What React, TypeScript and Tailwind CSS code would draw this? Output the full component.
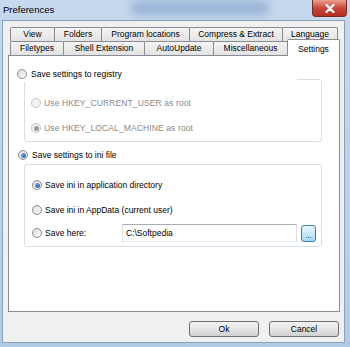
import React from 'react';

const tabBase =
  'flex items-center justify-center h-full border-t border-x border-[#898c95] bg-gradient-to-b from-[#f4f4f4] to-[#e2e2e2] -ml-px first:ml-0 rounded-t-[2px]';

function Radio({ checked, disabled }: { checked?: boolean; disabled?: boolean }) {
  return (
    <span
      className={`flex items-center justify-center w-[10px] h-[10px] shrink-0 rounded-full border ${
        disabled
          ? 'border-[#c4c4c4] bg-[#f4f4f4]'
          : 'border-[#8e8f8f] bg-gradient-to-br from-[#dcdcdc] to-[#fbfbfb]'
      }`}
    >
      {checked && (
        <span
          className={`w-[5px] h-[5px] rounded-full ${
            disabled ? 'bg-[#9a9a9a]' : 'bg-gradient-to-br from-[#7fb6ee] to-[#1550a8]'
          }`}
        />
      )}
    </span>
  );
}

function Option({
  label,
  checked,
  disabled,
}: {
  label: string;
  checked?: boolean;
  disabled?: boolean;
}) {
  return (
    <div className="flex items-center h-[16px] gap-[3px]">
      <Radio checked={checked} disabled={disabled} />
      <span className={disabled ? 'text-[#8a8a8a] tracking-[0.12px]' : 'text-black'}>
        {label}
      </span>
    </div>
  );
}

export default function App() {
  const row1 = [
    ['View', 'w-[45px]'],
    ['Folders', 'w-[48px]'],
    ['Program locations', 'w-[89px]'],
    ['Compress & Extract', 'w-[94px]'],
    ['Language', 'w-[56px]'],
  ];
  const row2 = [
    ['Filetypes', 'w-[54px]'],
    ['Shell Extension', 'w-[82px]'],
    ['AutoUpdate', 'w-[70px]'],
    ['Miscellaneous', 'w-[75px]'],
  ];

  return (
    <div className="relative w-[350px] h-[347px] flex flex-col overflow-hidden bg-gradient-to-b from-[#c6d9ee] to-[#b2cbe6] font-['Liberation_Sans',Arial,sans-serif] text-[8.5px] text-black">
      {/* blurred glass behind the caption */}
      <div className="absolute left-[130px] top-[1px] w-[140px] h-[14px] rounded-full bg-[#4f79ad] opacity-40 blur-[5px]" />

      {/* Title bar */}
      <div className="relative flex justify-between h-[20px] pl-[3px] pr-[3px]">
        <span className="pt-[3px] text-[9.5px] text-black">Preferences</span>
        <div className="flex items-center justify-center w-[35px] h-[17px] rounded-b-[4px] border border-t-0 border-[#7a2a22] bg-gradient-to-b from-[#e8a090] via-[#c9463a] to-[#b53024]">
          <svg width="10" height="9" viewBox="0 0 10 9">
            <path d="M1.5 1 L8.5 8 M8.5 1 L1.5 8" stroke="#ffffff" strokeWidth="2.2" strokeLinecap="round" />
          </svg>
        </div>
      </div>

      {/* Client area */}
      <div className="relative flex-1 ml-[2px] mr-[5px] mb-[4px] bg-[#f0f0f0] border border-[#8aa0b8] pt-[6px] pl-[5px] pr-[4px] flex flex-col">
        {/* Tabs */}
        <div className="flex flex-col">
          <div className="flex h-[14px] pl-[2px]">
            {row1.map(([t, w]) => (
              <div key={t} className={`${tabBase} ${w}`}>
                {t}
              </div>
            ))}
          </div>
          <div className="flex items-end h-[14px] pl-[2px]">
            {row2.map(([t, w]) => (
              <div key={t} className={`${tabBase} ${w}`}>
                {t}
              </div>
            ))}
            <div className="relative z-10 flex items-start justify-center pt-[3px] w-[53px] h-[17px] -ml-px -mb-px bg-white border-t border-x border-[#898c95] rounded-t-[2px]">
              Settings
            </div>
          </div>
        </div>

        {/* Panel */}
        <div className="h-[257px] bg-white border border-[#898c95] flex flex-col">
          <div className="relative z-10 w-[288px] mt-[10px] pl-[8px] bg-white">
            <div className="flex items-center h-[16px] gap-[4px]">
              <Radio />
              <span>Save settings to registry</span>
            </div>
          </div>
          <div className="ml-[15px] -mt-[3px] w-[298px] h-[63px] border border-[#d5dfe5] rounded-[3px] pt-[15px] pl-[6px] flex flex-col gap-[9px]">
            <Option label="Use HKEY_CURRENT_USER as root" disabled />
            <Option label="Use HKEY_LOCAL_MACHINE as root" checked disabled />
          </div>

          <div className="mt-[5px] pl-[9px] flex items-center h-[16px] gap-[4px]">
            <Radio checked />
            <span>Save settings to ini file</span>
          </div>
          <div className="ml-[15px] mt-[1px] w-[298px] h-[83px] border border-[#d5dfe5] rounded-[3px] pt-[12px] pl-[7px] flex flex-col">
            <Option label="Save ini in application directory" checked />
            <div className="mt-[9px]">
              <Option label="Save ini in AppData (current user)" />
            </div>
            <div className="mt-[6px] flex items-center h-[18px]">
              <Radio />
              <span className="ml-[3px] w-[77px]">Save here:</span>
              <div className="flex items-center w-[175px] h-[18px] pl-[3px] border border-[#abadb3] border-b-[#e3e9ef] border-x-[#dbdfe6] bg-white">
                C:\Softpedia
              </div>
              <div className="ml-[4px] flex items-end justify-center w-[15px] h-[17px] pb-[2px] rounded-[3px] border border-[#3c7fb1] bg-gradient-to-b from-[#eaf6fd] to-[#a7d9f5] text-[7px] leading-none">
                ...
              </div>
            </div>
          </div>
        </div>

        {/* Buttons */}
        <div className="flex justify-end gap-[10px] mt-[9px] mr-[1px]">
          <button className="w-[70px] h-[16px] rounded-[3px] border border-[#707070] bg-gradient-to-b from-[#f2f2f2] via-[#e6e6e6] to-[#d0d0d0] leading-none">
            Ok
          </button>
          <button className="w-[70px] h-[16px] rounded-[3px] border border-[#707070] bg-gradient-to-b from-[#f2f2f2] via-[#e6e6e6] to-[#d0d0d0] leading-none">
            Cancel
          </button>
        </div>
      </div>
    </div>
  );
}
